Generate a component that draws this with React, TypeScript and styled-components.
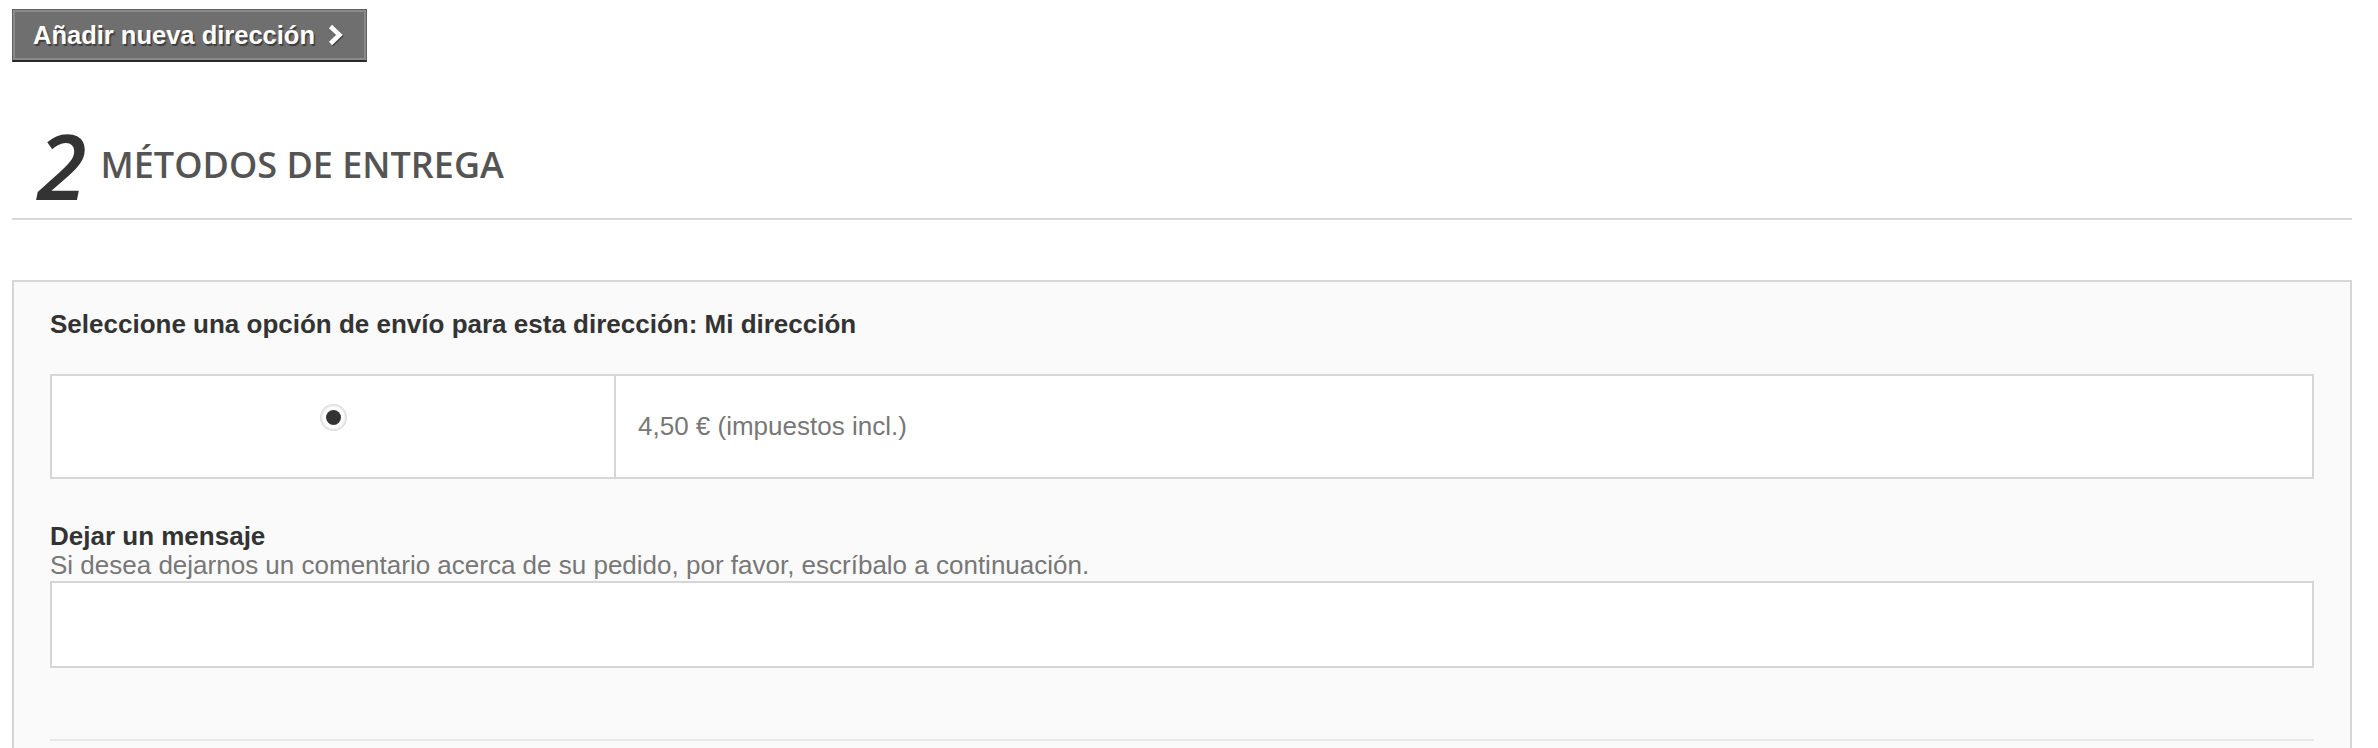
import React from "react";
import styled, { createGlobalStyle } from "styled-components";

const Global = createGlobalStyle`
  html, body { margin: 0; padding: 0; background: #ffffff; }
  body { font-family: "Liberation Sans", Arial, sans-serif; color: #777777; }
  * { box-sizing: border-box; }
`;

const Page = styled.div`
  padding: 9px 26px 0 12px;
  display: flex;
  flex-direction: column;
  align-items: flex-start;
`;

const Button = styled.a`
  display: inline-flex;
  border-style: solid;
  border-width: 1px 1px 2px 1px;
  border-color: #5f5f5f #5f5f5f #292929 #5f5f5f;
  background: #6f6f6f;
  cursor: pointer;
  text-decoration: none;
`;

const ButtonInner = styled.span`
  display: inline-flex;
  align-items: center;
  height: 50px;
  padding: 0 20px 0 18px;
  border: 2px solid #8b8a8a;
  font-family: "Liberation Sans", Arial, sans-serif;
  font-weight: 700;
  font-size: 25.5px;
  color: #ffffff;
  text-shadow: 1.5px 1.5px 1px rgba(0, 0, 0, 0.45);
  white-space: nowrap;
`;

const Chevron = styled.svg`
  width: 17px;
  height: 22px;
  margin-left: 12px;
  filter: drop-shadow(1.5px 1.5px 0.5px rgba(0, 0, 0, 0.45));
`;

const StepHeading = styled.h1`
  align-self: stretch;
  display: flex;
  align-items: center;
  margin: 58px 0 0 0;
  padding: 0 0 8px 25px;
  border-bottom: 2px solid #d6d6d6;
  font-family: "Open Sans", sans-serif;
  font-weight: 600;
`;

const StepNum = styled.span`
  font-size: 90px;
  line-height: 90px;
  font-style: italic;
  color: #333333;
  margin-right: 14px;
`;

const StepTitle = styled.span`
  font-size: 36px;
  line-height: 38px;
  color: #555454;
  text-transform: uppercase;
`;

const Panel = styled.div`
  align-self: stretch;
  margin-top: 60px;
  border: 2px solid #d6d6d6;
  border-bottom: none;
  background: #fafafa;
  padding: 24px 36px 0 36px;
  height: 470px;
`;

const PanelTitle = styled.p`
  margin: 0;
  font-weight: 700;
  font-size: 26px;
  line-height: 36px;
  color: #333333;
`;

const OptionTable = styled.div`
  margin-top: 32px;
  display: grid;
  grid-template-columns: 564px 1fr;
  height: 105px;
  border: 2px solid #d6d6d6;
  background: #ffffff;
`;

const RadioCell = styled.div`
  display: flex;
  justify-content: center;
  align-items: flex-start;
  padding-top: 28px;
  border-right: 2px solid #d6d6d6;
`;

const Radio = styled.span`
  width: 27px;
  height: 27px;
  border-radius: 50%;
  background: radial-gradient(circle, #ffffff 52%, #d9d9d9 70%, #ececec 85%, #ffffff 100%);
  display: flex;
  align-items: center;
  justify-content: center;
`;

const RadioDot = styled.span`
  width: 15px;
  height: 15px;
  border-radius: 50%;
  background: #333333;
`;

const PriceCell = styled.div`
  display: flex;
  align-items: center;
  padding-left: 22px;
  font-size: 26px;
  color: #777777;
`;

const Label = styled.p`
  margin: 43px 0 0 0;
  font-weight: 700;
  font-size: 26px;
  line-height: 29px;
  color: #333333;
`;

const Hint = styled.p`
  margin: 0;
  font-size: 26px;
  line-height: 29px;
  color: #777777;
`;

const MessageBox = styled.textarea`
  display: block;
  width: 100%;
  height: 87px;
  margin-top: 1px;
  border: 2px solid #d6d6d6;
  background: #ffffff;
  resize: none;
  outline: none;
  font-family: "Liberation Sans", Arial, sans-serif;
`;

const Divider = styled.hr`
  margin: 71px 0 0 0;
  border: none;
  border-top: 2px solid #e8e8e8;
`;

export default function App() {
  return (
    <>
      <Global />
      <Page>
        <Button>
          <ButtonInner>
            Añadir nueva dirección
            <Chevron viewBox="0 0 17 22">
              <polyline
                points="3.5,2.5 12.5,11 3.5,19.5"
                fill="none"
                stroke="#ffffff"
                strokeWidth="4.5"
                strokeLinecap="butt"
                strokeLinejoin="miter"
              />
            </Chevron>
          </ButtonInner>
        </Button>
        <StepHeading>
          <StepNum>2</StepNum>
          <StepTitle>Métodos de entrega</StepTitle>
        </StepHeading>
        <Panel>
          <PanelTitle>Seleccione una opción de envío para esta dirección: Mi dirección</PanelTitle>
          <OptionTable>
            <RadioCell>
              <Radio>
                <RadioDot />
              </Radio>
            </RadioCell>
            <PriceCell>4,50 € (impuestos incl.)</PriceCell>
          </OptionTable>
          <Label>Dejar un mensaje</Label>
          <Hint>Si desea dejarnos un comentario acerca de su pedido, por favor, escríbalo a continuación.</Hint>
          <MessageBox />
          <Divider />
        </Panel>
      </Page>
    </>
  );
}
